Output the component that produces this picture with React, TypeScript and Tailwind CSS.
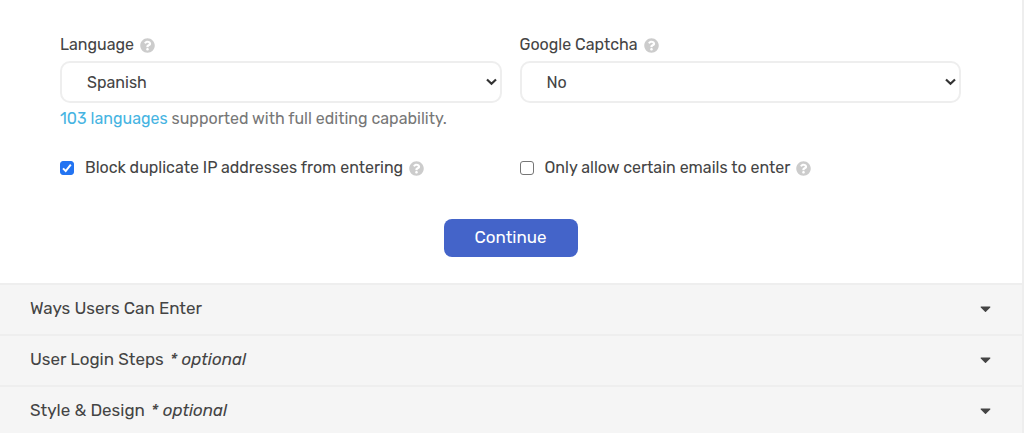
import React, { useState } from 'react';
import { FaCaretDown, FaQuestionCircle } from 'react-icons/fa';

interface SelectFieldProps {
  id: string;
  label: string;
  options: string[];
  children?: React.ReactNode;
}

interface CheckFieldProps {
  id: string;
  label: string;
  defaultChecked?: boolean;
}

interface Section {
  title: string;
  optional?: boolean;
}

const sections: Section[] = [
  { title: 'Ways Users Can Enter' },
  { title: 'User Login Steps', optional: true },
  { title: 'Style & Design', optional: true },
];

function HelpIcon() {
  return <FaQuestionCircle className="size-[15px] shrink-0 text-[#cccccc]" aria-hidden="true" />;
}

function SelectField({ id, label, options, children }: SelectFieldProps) {
  return (
    <div>
      <div className="flex items-center gap-[6px]">
        <label htmlFor={id} className="leading-6">
          {label}
        </label>
        <HelpIcon />
      </div>
      <div className="relative mt-1">
        <select
          id={id}
          className="block h-[42px] w-full appearance-none rounded-[10px] border-2 border-[#eeeeee] bg-white pl-[25px] pr-8 pt-[2px]"
        >
          {options.map((option) => (
            <option key={option}>{option}</option>
          ))}
        </select>
        {/* Dropdown arrow */}
        <svg
          className="pointer-events-none absolute right-[5px] top-[17px] h-2 w-[11px] text-[#333333]"
          viewBox="0 0 11 8"
          fill="none"
          stroke="currentColor"
          strokeWidth="2.2"
          aria-hidden="true"
        >
          <path d="M1 1.5 5.5 5.8 10 1.5" />
        </svg>
      </div>
      {children}
    </div>
  );
}

function CheckField({ id, label, defaultChecked = false }: CheckFieldProps) {
  const [checked, setChecked] = useState(defaultChecked);

  return (
    <div className="flex items-center">
      <span className="relative mr-[11px] size-[14px]">
        <input
          id={id}
          type="checkbox"
          checked={checked}
          onChange={(e) => setChecked(e.target.checked)}
          className="block size-[14px] appearance-none rounded-[3px] border border-[#767676] bg-white checked:border-[#2374f2] checked:bg-[#2374f2]"
        />
        {checked && (
          <svg
            className="pointer-events-none absolute inset-0 size-[14px] text-white"
            viewBox="0 0 14 14"
            fill="none"
            stroke="currentColor"
            strokeWidth="2"
            aria-hidden="true"
          >
            <path d="M3 7.4 5.7 10 10.8 3.6" />
          </svg>
        )}
      </span>
      <label htmlFor={id} className="mr-[6px] leading-6">
        {label}
      </label>
      <HelpIcon />
    </div>
  );
}

export default function App() {
  return (
    <div className="h-screen overflow-hidden border-r-2 border-[#eeeeee] bg-white font-['Rubik','Roboto',sans-serif] text-base text-[#444444]">
      <form className="pb-[26px] pl-[60px] pr-[61px] pt-[33px]" onSubmit={(e) => e.preventDefault()}>
        <div className="grid grid-cols-2 gap-x-[18px]">
          <SelectField id="language" label="Language" options={['Spanish', 'English', 'French']}>
            <p className="mt-1 leading-6 text-[#777777]">
              <a href="#languages" className="text-[#46b4e2]">
                103 languages
              </a>{' '}
              supported with full editing capability.
            </p>
          </SelectField>
          <SelectField id="captcha" label="Google Captcha" options={['No', 'Yes']} />
        </div>

        <div className="mt-[25px] grid grid-cols-2 gap-x-[18px]">
          <CheckField id="block-ip" label="Block duplicate IP addresses from entering" defaultChecked />
          <CheckField id="allow-emails" label="Only allow certain emails to enter" />
        </div>

        <div className="mt-[39px] flex justify-center">
          <button
            type="submit"
            className="h-[38px] w-[134px] rounded-lg bg-[#4464c9] text-[17px] text-white"
          >
            Continue
          </button>
        </div>
      </form>

      {/* Collapsed sections */}
      {sections.map(({ title, optional }) => (
        <button
          key={title}
          type="button"
          aria-expanded="false"
          className="flex h-[51px] w-full items-center justify-between border-t-2 border-[#eeeeee] bg-[#f5f5f5] pb-[2px] pl-[30px] pr-7 text-left text-[17px]"
        >
          <span>
            {title}
            {optional && <em className="ml-[6px]">* optional</em>}
          </span>
          <FaCaretDown className="size-[17px] text-[#444444]" aria-hidden="true" />
        </button>
      ))}
    </div>
  );
}
